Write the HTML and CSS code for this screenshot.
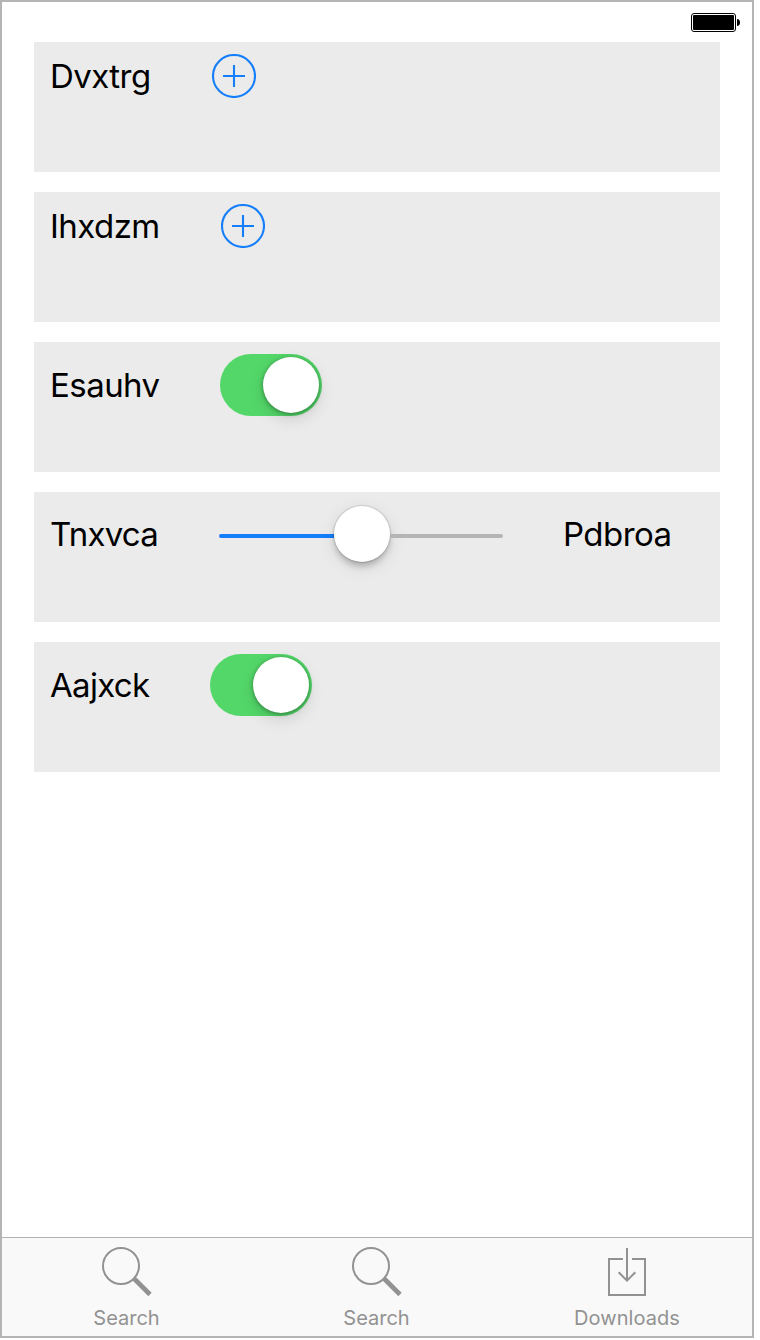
FILE: index.html
```html
<!DOCTYPE html>
<html lang="en">
<head>
<meta charset="utf-8">
<title>Settings</title>
<link rel="stylesheet" href="styles.css">
</head>
<body>
<div class="screen">
  <header class="status">
    <svg class="battery" width="50" height="20" viewBox="0 0 50 20">
      <rect x="0.5" y="0.5" width="44" height="18" rx="2.5" fill="#fff" stroke="#000"/>
      <rect x="2" y="2" width="41" height="15" rx="1"/>
      <path d="M46 6c2 0 3 1.500 3 3.500s-1 3.500-3 3.500z"/>
    </svg>
  </header>
  <main class="cards">
    <section class="card">
      <span class="label l1">Dvxtrg</span>
      <svg class="add" width="44" height="44" viewBox="0 0 44 44"><circle cx="22" cy="22" r="21"/><path d="M11 22h22M22 11v22"/></svg>
    </section>
    <section class="card">
      <span class="label l2">Ihxdzm</span>
      <svg class="add" width="44" height="44" viewBox="0 0 44 44"><circle cx="22" cy="22" r="21"/><path d="M11 22h22M22 11v22"/></svg>
    </section>
    <section class="card">
      <span class="label l3">Esauhv</span>
      <span class="switch"><span class="knob"></span></span>
    </section>
    <section class="card">
      <span class="label l4">Tnxvca</span>
      <span class="slider"><span class="fill"></span><span class="thumb"></span><span class="rest"></span></span>
      <span class="label l5">Pdbroa</span>
    </section>
    <section class="card">
      <span class="label l6">Aajxck</span>
      <span class="switch"><span class="knob"></span></span>
    </section>
  </main>
  <nav class="tabs">
    <div class="tab">
      <svg class="icon" width="52" height="52" viewBox="0 0 52 52"><circle cx="20" cy="20" r="18"/><path class="handle" d="M33 32.500L49 48.500"/></svg>
      <span class="search">Search</span>
    </div>
    <div class="tab">
      <svg class="icon" width="52" height="52" viewBox="0 0 52 52"><circle cx="20" cy="20" r="18"/><path class="handle" d="M33 32.500L49 48.500"/></svg>
      <span class="search">Search</span>
    </div>
    <div class="tab">
      <svg class="icon" width="52" height="52" viewBox="0 0 52 52"><path d="M22 13H8v36h36V13H31M26 2v33M17.700 26.300L26 34.600l8.300-8.300"/></svg>
      <span class="downloads">Downloads</span>
    </div>
  </nav>
</div>
</body>
</html>
```
FILE: styles.css
```css
* { box-sizing: border-box; }
body { margin: 0; background: #fff; font-family: Inter, "Liberation Sans", sans-serif; }
.screen {
  display: flex; flex-direction: column;
  width: 754px; height: 1338px;
  border: 2px solid #b4b4b4; background: #fff;
}
.status { display: flex; justify-content: flex-end; height: 40px; padding: 11px 11px 0 0; }
.battery { display: block; }
.cards { display: flex; flex-direction: column; gap: 20px; flex: 1; padding: 0 32px; }
.card { display: flex; align-items: flex-start; height: 130px; padding: 12px 0 0 16px; background: #ebebeb; }
.label { flex: none; height: 44px; line-height: 44px; font-size: 33px; letter-spacing: -.55px; color: #000; white-space: nowrap; }
.l1 { width: 162px; }
.l2 { width: 171px; }
.l3 { width: 170px; margin-top: 9px; }
.l4 { width: 169px; margin-top: 8px; letter-spacing: -.75px; }
.l5 { margin: 8px 0 0 60px; }
.l6 { width: 160px; margin-top: 9px; letter-spacing: -.7px; }
.add { display: block; fill: none; stroke: #157efb; stroke-width: 2.1; }
.switch {
  display: flex; justify-content: flex-end; width: 102px; height: 62px;
  padding: 3px; border-radius: 31px; background: #53d769;
}
.knob, .thumb { flex: none; width: 56px; height: 56px; border-radius: 50%; background: #fff; }
.knob { box-shadow: 0 1px 4px rgba(0,0,0,.38), 0 6px 16px rgba(0,0,0,.13); }
.slider { display: flex; align-items: center; width: 284px; height: 64px; }
.fill, .rest { height: 4px; }
.fill { width: 115px; border-radius: 2px 0 0 2px; background: #157efb; }
.rest { flex: 1; border-radius: 0 2px 2px 0; background: #b5b5b5; }
.thumb { margin-top: -4px; box-shadow: 0 0 1px 1px rgba(0,0,0,.12), 0 5px 6px -1px rgba(0,0,0,.22), 0 5px 18px rgba(0,0,0,.1); }
.tabs { display: flex; height: 99px; border-top: 1px solid #b2b2b2; background: #f9f9f9; }
.tab { display: flex; flex-direction: column; align-items: center; width: 250px; padding-top: 8px; font-size: 20px; line-height: 24px; color: #929292; }
.icon { display: block; margin-bottom: 8px; fill: none; stroke: #929292; stroke-width: 2; }
.handle { stroke-width: 4.6; }
.search { margin-right: 1px; }
.downloads { letter-spacing: .05px; }
```
